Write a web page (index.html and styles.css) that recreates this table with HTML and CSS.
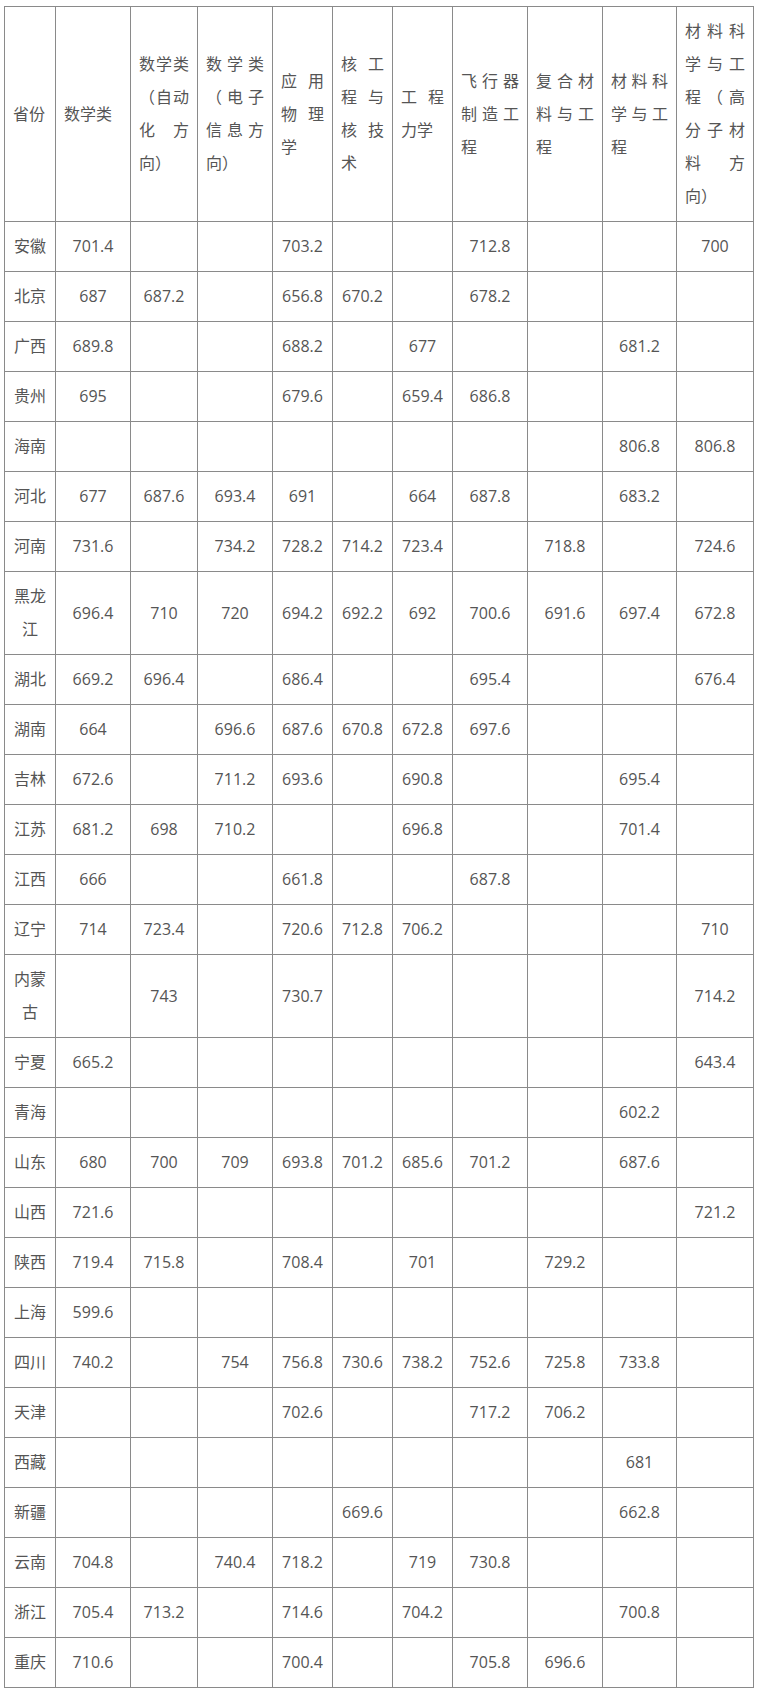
FILE: index.html
```html
<!DOCTYPE html>
<html lang="zh-CN">
<head>
<meta charset="utf-8">
<title>分数表</title>
<link rel="stylesheet" href="styles.css">
</head>
<body>
<table class="scores">
<colgroup>
<col class="w51"><col class="w75"><col class="w67"><col class="w75"><col class="w60"><col class="w60"><col class="w60"><col class="w75"><col class="w75"><col class="w74"><col class="w77">
</colgroup>
<thead>
<tr><th>省份</th><th>数学类</th><th>数学类（自动化方向）</th><th>数学类（电子信息方向）</th><th>应用物理学</th><th>核工程与核技术</th><th>工程力学</th><th>飞行器制造工程</th><th>复合材料与工程</th><th>材料科学与工程</th><th>材料科学与工程（高分子材料方向）</th></tr>
</thead>
<tbody>
<tr><td>安徽</td><td>701.4</td><td></td><td></td><td>703.2</td><td></td><td></td><td>712.8</td><td></td><td></td><td>700</td></tr>
<tr><td>北京</td><td>687</td><td>687.2</td><td></td><td>656.8</td><td>670.2</td><td></td><td>678.2</td><td></td><td></td><td></td></tr>
<tr><td>广西</td><td>689.8</td><td></td><td></td><td>688.2</td><td></td><td>677</td><td></td><td></td><td>681.2</td><td></td></tr>
<tr><td>贵州</td><td>695</td><td></td><td></td><td>679.6</td><td></td><td>659.4</td><td>686.8</td><td></td><td></td><td></td></tr>
<tr><td>海南</td><td></td><td></td><td></td><td></td><td></td><td></td><td></td><td></td><td>806.8</td><td>806.8</td></tr>
<tr><td>河北</td><td>677</td><td>687.6</td><td>693.4</td><td>691</td><td></td><td>664</td><td>687.8</td><td></td><td>683.2</td><td></td></tr>
<tr><td>河南</td><td>731.6</td><td></td><td>734.2</td><td>728.2</td><td>714.2</td><td>723.4</td><td></td><td>718.8</td><td></td><td>724.6</td></tr>
<tr><td>黑龙江</td><td>696.4</td><td>710</td><td>720</td><td>694.2</td><td>692.2</td><td>692</td><td>700.6</td><td>691.6</td><td>697.4</td><td>672.8</td></tr>
<tr><td>湖北</td><td>669.2</td><td>696.4</td><td></td><td>686.4</td><td></td><td></td><td>695.4</td><td></td><td></td><td>676.4</td></tr>
<tr><td>湖南</td><td>664</td><td></td><td>696.6</td><td>687.6</td><td>670.8</td><td>672.8</td><td>697.6</td><td></td><td></td><td></td></tr>
<tr><td>吉林</td><td>672.6</td><td></td><td>711.2</td><td>693.6</td><td></td><td>690.8</td><td></td><td></td><td>695.4</td><td></td></tr>
<tr><td>江苏</td><td>681.2</td><td>698</td><td>710.2</td><td></td><td></td><td>696.8</td><td></td><td></td><td>701.4</td><td></td></tr>
<tr><td>江西</td><td>666</td><td></td><td></td><td>661.8</td><td></td><td></td><td>687.8</td><td></td><td></td><td></td></tr>
<tr><td>辽宁</td><td>714</td><td>723.4</td><td></td><td>720.6</td><td>712.8</td><td>706.2</td><td></td><td></td><td></td><td>710</td></tr>
<tr><td>内蒙古</td><td></td><td>743</td><td></td><td>730.7</td><td></td><td></td><td></td><td></td><td></td><td>714.2</td></tr>
<tr><td>宁夏</td><td>665.2</td><td></td><td></td><td></td><td></td><td></td><td></td><td></td><td></td><td>643.4</td></tr>
<tr><td>青海</td><td></td><td></td><td></td><td></td><td></td><td></td><td></td><td></td><td>602.2</td><td></td></tr>
<tr><td>山东</td><td>680</td><td>700</td><td>709</td><td>693.8</td><td>701.2</td><td>685.6</td><td>701.2</td><td></td><td>687.6</td><td></td></tr>
<tr><td>山西</td><td>721.6</td><td></td><td></td><td></td><td></td><td></td><td></td><td></td><td></td><td>721.2</td></tr>
<tr><td>陕西</td><td>719.4</td><td>715.8</td><td></td><td>708.4</td><td></td><td>701</td><td></td><td>729.2</td><td></td><td></td></tr>
<tr><td>上海</td><td>599.6</td><td></td><td></td><td></td><td></td><td></td><td></td><td></td><td></td><td></td></tr>
<tr><td>四川</td><td>740.2</td><td></td><td>754</td><td>756.8</td><td>730.6</td><td>738.2</td><td>752.6</td><td>725.8</td><td>733.8</td><td></td></tr>
<tr><td>天津</td><td></td><td></td><td></td><td>702.6</td><td></td><td></td><td>717.2</td><td>706.2</td><td></td><td></td></tr>
<tr><td>西藏</td><td></td><td></td><td></td><td></td><td></td><td></td><td></td><td></td><td>681</td><td></td></tr>
<tr><td>新疆</td><td></td><td></td><td></td><td></td><td>669.6</td><td></td><td></td><td></td><td>662.8</td><td></td></tr>
<tr><td>云南</td><td>704.8</td><td></td><td>740.4</td><td>718.2</td><td></td><td>719</td><td>730.8</td><td></td><td></td><td></td></tr>
<tr><td>浙江</td><td>705.4</td><td>713.2</td><td></td><td>714.6</td><td></td><td>704.2</td><td></td><td></td><td>700.8</td><td></td></tr>
<tr><td>重庆</td><td>710.6</td><td></td><td></td><td>700.4</td><td></td><td></td><td>705.8</td><td>696.6</td><td></td><td></td></tr>
</tbody>
</table>
</body>
</html>
```

FILE: styles.css
```css
html, body {
  margin: 0;
  padding: 0;
  background: #ffffff;
}

body {
  padding: 6px 0 0 4px;
  font-family: "Open Sans", "Noto Sans CJK SC", sans-serif;
  font-size: 16px;
  color: #555555;
}

.scores {
  border-collapse: collapse;
  table-layout: fixed;
  width: 750px;
}

.w51 { width: 51px; }
.w60 { width: 60px; }
.w67 { width: 67px; }
.w74 { width: 74px; }
.w75 { width: 75px; }
.w77 { width: 77px; }

.scores th,
.scores td {
  border: 1px solid #8a8a8a;
  padding: 8px 8px;
  line-height: 33px;
  vertical-align: middle;
  word-break: normal;
  text-spacing-trim: space-all;
}

.scores th {
  font-weight: normal;
  text-align: justify;
  text-align-last: left;
}

.scores td {
  text-align: center;
}
```
